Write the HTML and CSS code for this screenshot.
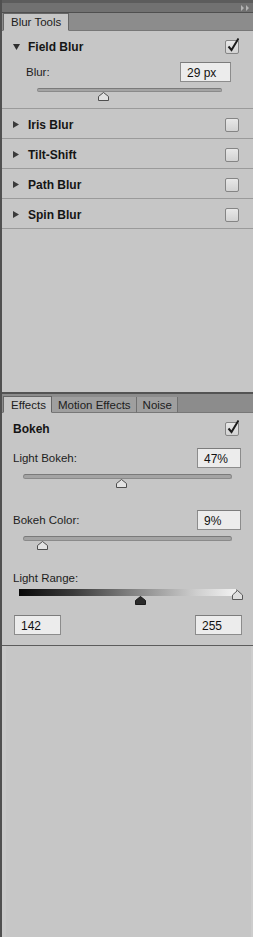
FILE: index.html
```html
<!DOCTYPE html>
<html lang="en">
<head>
    <meta charset="UTF-8">
    <meta name="viewport" content="width=device-width, initial-scale=1.0">
    <title>Blur Gallery</title>
    <link rel="stylesheet" href="styles.css">
</head>
<body>
<div class="dock">
    <section class="panel blurtools">
        <div class="topbar">
            <svg class="collapse" width="10" height="6" viewBox="0 0 10 6"><path d="M1 0 L4 3 L1 6 Z M6 0 L9 3 L6 6 Z" fill="#b4b4b4"/></svg>
        </div>
        <div class="tabs">
            <div class="tab active">Blur Tools</div>
        </div>

        <div class="group open">
            <div class="grouphead">
                <svg class="twisty down" width="7" height="6" viewBox="0 0 7 6"><path d="M0 0 H7 L3.5 6 Z" fill="#2e2e2e"/></svg>
                <span class="grouptitle">Field Blur</span>
                <span class="check on"><svg width="14" height="16" viewBox="0 0 14 16"><path d="M3.5 8.5 L6.5 12 L13.5 0.5" fill="none" stroke="#1c1c1c" stroke-width="2"/></svg></span>
            </div>
            <div class="field blurfield">
                <label>Blur:</label>
                <div class="num wide">29 px</div>
            </div>
            <div class="slider blurslider">
                <div class="track"></div>
                <svg class="thumb" style="left:35.7%" width="11" height="9" viewBox="0 0 11 9"><path d="M0.5 8.5 V4.5 L5.5 0.5 L10.5 4.5 V8.5 Z" fill="#e2e2e2" stroke="#4e4e4e" stroke-linejoin="round"/></svg>
            </div>
        </div>
        <div class="group">
            <div class="grouphead">
                <svg class="twisty" width="6" height="7" viewBox="0 0 6 7"><path d="M0 0 V7 L6 3.5 Z" fill="#3a3a3a"/></svg>
                <span class="grouptitle">Iris Blur</span>
                <span class="check"></span>
            </div>
        </div>
        <div class="group">
            <div class="grouphead">
                <svg class="twisty" width="6" height="7" viewBox="0 0 6 7"><path d="M0 0 V7 L6 3.5 Z" fill="#3a3a3a"/></svg>
                <span class="grouptitle">Tilt-Shift</span>
                <span class="check"></span>
            </div>
        </div>
        <div class="group">
            <div class="grouphead">
                <svg class="twisty" width="6" height="7" viewBox="0 0 6 7"><path d="M0 0 V7 L6 3.5 Z" fill="#3a3a3a"/></svg>
                <span class="grouptitle">Path Blur</span>
                <span class="check"></span>
            </div>
        </div>
        <div class="group">
            <div class="grouphead">
                <svg class="twisty" width="6" height="7" viewBox="0 0 6 7"><path d="M0 0 V7 L6 3.5 Z" fill="#3a3a3a"/></svg>
                <span class="grouptitle">Spin Blur</span>
                <span class="check"></span>
            </div>
        </div>
    </section>

    <section class="panel effects">
        <div class="tabs">
            <div class="tab active">Effects</div>
            <div class="tab">Motion Effects</div>
            <div class="tab">Noise</div>
        </div>
        <div class="effecthead">
            <span class="grouptitle">Bokeh</span>
            <span class="check on"><svg width="14" height="16" viewBox="0 0 14 16"><path d="M3.5 8.5 L6.5 12 L13.5 0.5" fill="none" stroke="#1c1c1c" stroke-width="2"/></svg></span>
        </div>
        <div class="field">
            <label>Light Bokeh:</label>
            <div class="num">47%</div>
        </div>
        <div class="slider">
            <div class="track"></div>
            <svg class="thumb" style="left:47%" width="11" height="9" viewBox="0 0 11 9"><path d="M0.5 8.5 V4.5 L5.5 0.5 L10.5 4.5 V8.5 Z" fill="#e2e2e2" stroke="#4e4e4e" stroke-linejoin="round"/></svg>
        </div>
        <div class="field second">
            <label>Bokeh Color:</label>
            <div class="num">9%</div>
        </div>
        <div class="slider">
            <div class="track"></div>
            <svg class="thumb" style="left:9%" width="11" height="9" viewBox="0 0 11 9"><path d="M0.5 8.5 V4.5 L5.5 0.5 L10.5 4.5 V8.5 Z" fill="#e2e2e2" stroke="#4e4e4e" stroke-linejoin="round"/></svg>
        </div>
        <div class="rangelabel">Light Range:</div>
        <div class="range">
            <div class="ramp"></div>
            <svg class="thumb" style="left:55.7%" width="11" height="9" viewBox="0 0 11 9"><path d="M0.5 8.5 V4.5 L5.5 0.5 L10.5 4.5 V8.5 Z" fill="#2a2a2a" stroke="#1a1a1a" stroke-linejoin="round"/></svg>
            <svg class="thumb end" style="left:100%" width="11" height="10" viewBox="0 0 11 10"><path d="M0.5 9.5 V5 L5.5 0.5 L10.5 5 V9.5 Z" fill="#dedede" stroke="#5a5a5a" stroke-linejoin="round"/></svg>
        </div>
        <div class="rangevals">
            <div class="num range-num">142</div>
            <div class="num range-num">255</div>
        </div>
    </section>

    <div class="dockfill"></div>
</div>
</body>
</html>
```

FILE: styles.css
```css
body { margin: 0; background-color: #c6c6c6; font-family: "Liberation Sans", Arial, sans-serif; font-size: 11.5px; color: #1d1d1d; }
.dock { display: flex; flex-direction: column; height: 937px; border-left: 2px solid #505050; background-color: #c6c6c6; }

/* panels */
.panel { display: flex; flex-direction: column; }
.blurtools { height: 392px; }
.effects { border-top: 2px solid #535353; border-bottom: 1px solid #5c5c5c; padding-bottom: 10px; }
.dockfill { flex: 1; border-left: 4px solid #cacaca; border-right: 2px solid #cdcdcd; }

.topbar { display: flex; justify-content: flex-end; align-items: center; height: 9px; background-color: #717171; border-top: 3px solid #5c5c5c; border-bottom: 1px solid #4f4f4f; padding-right: 3px; }
.tabs { display: flex; align-items: flex-end; height: 18px; background-color: #8c8c8c; border-bottom: 1px solid #777; }
.blurtools .tabs { height: 17px; }
.tab { display: flex; align-items: center; box-sizing: border-box; height: 16px; padding: 0 5px 0 6px; white-space: nowrap; background-color: #9f9f9f; border-right: 1px solid #707070; border-bottom: 1px solid #777; margin-bottom: -1px; color: #202020; }
.tab.active { background-color: #c6c6c6; border: 1px solid #666; border-bottom: 1px solid #c6c6c6; margin-left: 1px; height: 17px; padding: 0 5px 0 7px; }
.blurtools .tab.active { width: 66px; height: 18px; padding-left: 7px; }

/* collapsible groups */
.group { border-bottom: 1px solid #9a9a9a; }
.group.open { height: 77px; }
.grouphead { display: flex; align-items: center; box-sizing: border-box; height: 29px; padding: 2px 14px 0 11px; }
.group.open .grouphead { height: 31px; padding-top: 0; }
.twisty { margin-right: 9px; }
.twisty.down { margin-right: 8px; }
.grouptitle { flex: 1; font-weight: bold; font-size: 12px; color: #151515; }
.check { position: relative; width: 12px; height: 12px; border: 1px solid #858585; border-radius: 2px; background: linear-gradient(#e8e8e8, #d2d2d2); }
.check svg { position: absolute; left: -1px; top: -3px; }
.effecthead { display: flex; align-items: center; height: 32px; padding: 0 14px 0 11px; }

/* number fields */
.field { display: flex; align-items: center; justify-content: space-between; height: 20px; margin-top: 3px; padding: 0 12px 0 11px; }
.field.second { margin-top: 31px; }
.blurfield { margin-top: 0; padding: 0 22px 0 24px; }
.num { box-sizing: border-box; width: 44px; height: 20px; padding: 3px 6px 0; background-color: #ececec; border: 1px solid #8c8c8c; border-top-color: #7c7c7c; font-size: 12px; color: #111; }
.num.wide { width: 51px; }

/* sliders */
.slider { position: relative; height: 5px; margin: 6px 21px 0 21px; }
.blurslider { height: 4px; margin: 6px 31px 0 35px; }
.track { height: 100%; box-sizing: border-box; border: 1px solid #8a8a8a; border-top-color: #7a7a7a; border-radius: 3px; background-color: #a4a4a4; }
.thumb { position: absolute; top: 100%; margin-left: -5px; }

.rangelabel { margin: 31px 0 0 11px; height: 14px; }
.range { position: relative; height: 7px; margin: 3px 16px 0 17px; }
.ramp { height: 100%; background: linear-gradient(to right, #080808, #3a3a3a 25%, #8a8a8a 55%, #cfcfcf 82%, #f2f2f2); border-right: 1px solid #9a9a9a; }
.thumb.end { top: 1px; }
.rangevals { display: flex; justify-content: space-between; margin-top: 19px; padding: 0 11px 0 12px; }
.range-num { width: 47px; }
```
